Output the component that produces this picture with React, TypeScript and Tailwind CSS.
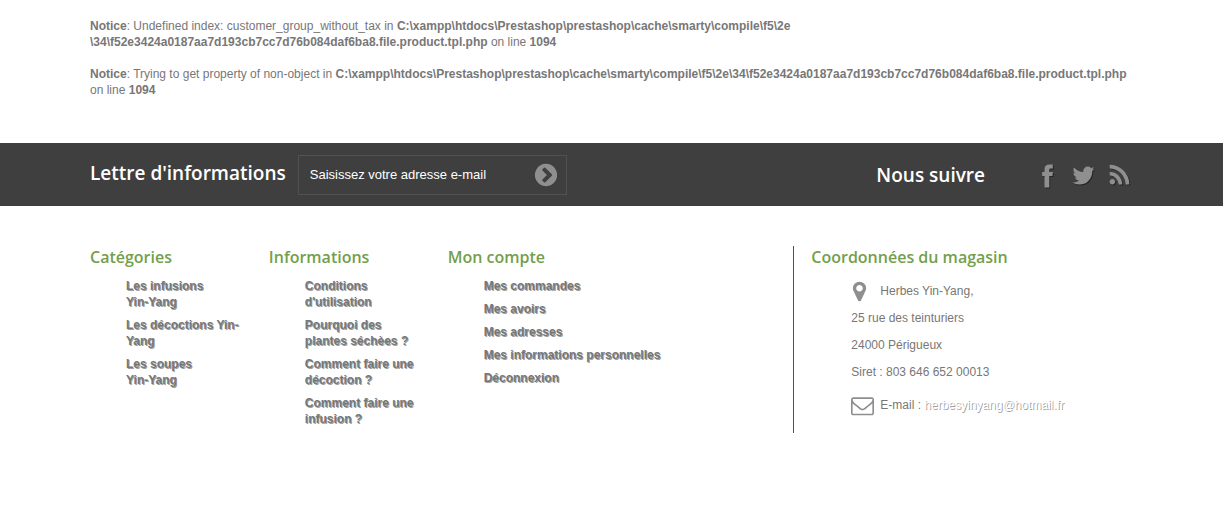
import type { ReactNode } from "react";

// the facebook glyph comes from the older, y-up version of the icon set
const icons = {
  facebook:
    "M511 980h257l-30 -284h-227v-824h-341v824h-170v284h170v171q0 182 86 275.5t283 93.5h227v-284h-142q-39 0 -62.5 -6.5t-34 -23.5t-13.5 -34.5t-3 -49.5v-142z",
  twitter:
    "M1684 408q-67 98-162 167 1 14 1 42 0 130-38 259.5t-115.5 248.5-184.5 210.5-258 146-323 54.5q-271 0-496-145 35 4 78 4 225 0 401-138-105-2-188-64.5t-114-159.5q33 5 61 5 43 0 85-11-112-23-185.5-111.5t-73.5-205.5v-4q68 38 146 41-66-44-105-115t-39-154q0-88 44-163 121 149 294.5 238.5t371.5 99.5q-8-38-8-74 0-134 94.5-228.5t228.5-94.5q140 0 236 102 109-21 205-78-37 115-142 178 93-10 186-50z",
  rss: "M576 1344q0 80-56 136t-136 56-136-56-56-136 56-136 136-56 136 56 56 136zm512 123q2 28-17 48-18 21-47 21h-135q-25 0-43-16.5t-20-41.5q-22-229-184.5-391.5t-391.5-184.5q-25-2-41.5-20t-16.5-43v-135q0-29 21-47 17-17 43-17h5q160 13 306 80.5t259 181.5q114 113 181.5 259t80.5 306zm512 2q2 27-18 47-18 20-46 20h-143q-26 0-44.5-17.5t-19.5-42.5q-12-215-101-408.5t-231.5-336-336-231.5-408.5-102q-25-1-42.5-19.5t-17.5-43.5v-143q0-28 20-46 18-18 44-18h3q262 13 501.5 120t425.5 294q187 186 294 425.5t120 501.5z",
  chevron:
    "M845 1395l454-454q19-19 19-45t-19-45l-454-454q-19-19-45-19t-45 19l-102 102q-19 19-19 45t19 45l307 307-307 307q-19 19-19 45t19 45l102 102q19 19 45 19t45-19zm819-499q0 209-103 385.5t-279.5 279.5-385.5 103-385.5-103-279.5-279.5-103-385.5 103-385.5 279.5-279.5 385.5-103 385.5 103 279.5 279.5 103 385.5z",
  marker:
    "M1152 640q0-106-75-181t-181-75-181 75-75 181 75 181 181 75 181-75 75-181zm256 0q0 109-33 179l-364 774q-16 33-47.5 52t-67.5 19-67.5-19-46.5-52l-365-774q-33-70-33-179 0-212 150-362t362-150 362 150 150 362z",
  envelope:
    "M1664 1504v-768q-32 36-69 66-268 206-426 338-51 43-83 67t-86.5 48.5-102.5 24.5h-2q-48 0-102.5-24.5t-86.5-48.5-83-67q-158-132-426-338-37-30-69-66v768q0 13 9.5 22.5t22.5 9.5h1472q13 0 22.5-9.5t9.5-22.5zm0-1051v-24.5l-.5-13-3-12.5-5.5-9-9-7.5-14-2.5h-1472q-13 0-22.5 9.5t-9.5 22.5q0 168 147 284 193 152 401 317 6 5 35 29.5t46 37.5 44.5 31.5 50.5 27.5 43 9h2q20 0 43-9t50.5-27.5 44.5-31.5 46-37.5 35-29.5q208-165 401-317 54-43 100.5-115.5t46.5-131.5zm128-37v1088q0 66-47 113t-113 47h-1472q-66 0-113-47t-47-113v-1088q0-66 47-113t113-47h1472q66 0 113 47t47 113z",
};

function Icon({ name, className }: { name: keyof typeof icons; className: string }) {
  return (
    <svg viewBox="0 0 1792 1792" fill="currentColor" aria-hidden="true" className={`shrink-0 ${className}`}>
      <path d={icons[name]} transform={name === "facebook" ? "translate(512 1630) scale(1 -1)" : undefined} />
    </svg>
  );
}

const categories: ReactNode[] = [
  <>Les infusions<br />Yin-Yang</>,
  "Les décoctions Yin-Yang",
  <>Les soupes<br />Yin-Yang</>,
];

const informations: ReactNode[] = [
  "Conditions d'utilisation",
  "Pourquoi des plantes séchèes ?",
  "Comment faire une décoction ?",
  "Comment faire une infusion ?",
];

const account: ReactNode[] = [
  "Mes commandes",
  "Mes avoirs",
  "Mes adresses",
  "Mes informations personnelles",
  "Déconnexion",
];

const social = [
  { name: "facebook" as const, label: "Facebook" },
  { name: "twitter" as const, label: "Twitter" },
  { name: "rss" as const, label: "RSS" },
];

function FooterTitle({ children }: { children: ReactNode }) {
  return <h4 className="font-['Open_Sans',sans-serif] text-base leading-[22px] font-semibold text-[#739f4c]">{children}</h4>;
}

function LinkBlock({ title, links, className }: { title: string; links: ReactNode[]; className: string }) {
  return (
    <section className={`px-[15px] ${className}`}>
      <FooterTitle>{title}</FooterTitle>
      <ul className="mt-[10px] ml-9 space-y-[7px]">
        {links.map((link, i) => (
          <li key={i} className="leading-4">
            <a href="#" className="font-bold [text-shadow:1px_1px_0_rgba(0,0,0,0.4)]">{link}</a>
          </li>
        ))}
      </ul>
    </section>
  );
}

export default function App() {
  return (
    <div className="min-h-screen bg-white font-['Liberation_Sans',Arial,sans-serif] text-xs leading-4 text-[#777777]">
      <main className="mx-auto max-w-[1073px] px-[15px] pt-[18px] pb-[45px]">
        <p>
          <b>Notice</b>: Undefined index: customer_group_without_tax in{" "}
          <b>C:\xampp\htdocs\Prestashop\prestashop\cache\smarty\compile\f5\2e<br />\34\f52e3424a0187aa7d193cb7cc7d76b084daf6ba8.file.product.tpl.php</b> on line <b>1094</b>
        </p>
        <p className="mt-4">
          <b>Notice</b>: Trying to get property of non-object in{" "}
          <b>C:\xampp\htdocs\Prestashop\prestashop\cache\smarty\compile\f5\2e\34\f52e3424a0187aa7d193cb7cc7d76b084daf6ba8.file.product.tpl.php</b>{" "}
          on line <b>1094</b>
        </p>
      </main>

      <div className="bg-[#3f3f3f]">
        <div className="mx-auto flex max-w-[1073px] items-center justify-between px-[15px] pt-3 pb-[11px]">
          <form className="flex items-center" onSubmit={(e) => e.preventDefault()}>
            <label htmlFor="newsletter" className="pb-1 font-['Open_Sans',sans-serif] text-[19px] leading-7 font-semibold text-white">
              Lettre d'informations
            </label>
            <div className="ml-3 flex h-10 w-[269px] items-center border border-[#515151] pr-[7px] pl-[11px]">
              <input
                id="newsletter"
                type="text"
                defaultValue="Saisissez votre adresse e-mail"
                className="min-w-0 flex-1 text-[13px] text-white outline-none"
              />
              <button type="submit" aria-label="OK" className="text-[#908f8f]">
                <Icon name="chevron" className="size-[26px]" />
              </button>
            </div>
          </form>
          <div className="flex items-center">
            <h4 className="font-['Open_Sans',sans-serif] text-[19px] leading-7 font-semibold text-white">Nous suivre</h4>
            <ul className="mr-px ml-[50px] flex gap-[11px] text-[#908f8f]">
              {social.map((s) => (
                <li key={s.name}>
                  <a href="#" aria-label={s.label} className="block drop-shadow-[1px_1px_0_rgba(0,0,0,0.4)]">
                    <Icon name={s.name} className="size-[25px]" />
                  </a>
                </li>
              ))}
            </ul>
          </div>
        </div>
      </div>

      <footer className="mx-auto flex max-w-[1073px] pt-10">
        <LinkBlock title="Catégories" links={categories} className="w-1/6" />
        <LinkBlock title="Informations" links={informations} className="w-1/6" />
        <LinkBlock title="Mon compte" links={account} className="w-1/3" />
        <section className="ml-[3px] flex-1 border-l border-[#515151] pb-[14px] pl-[17px]">
          <FooterTitle>Coordonnées du magasin</FooterTitle>
          <address className="mt-[10px] ml-10 leading-[27px] not-italic">
            <p className="flex items-center">
              <Icon name="marker" className="-ml-[3px] mr-[9px] size-[23px] text-[#908f8f]" />
              Herbes Yin-Yang,
            </p>
            <p>25 rue des teinturiers</p>
            <p>24000 Périgueux</p>
            <p>Siret : 803 646 652 00013</p>
            <p className="mt-[6px] flex items-center">
              <Icon name="envelope" className="mr-[6px] size-[23px] text-[#908f8f]" />
              <span>
                E-mail : <a href="#" className="text-white [text-shadow:1px_1px_0_rgba(0,0,0,0.4)]">herbesyinyang@hotmail.fr</a>
              </span>
            </p>
          </address>
        </section>
      </footer>
    </div>
  );
}
